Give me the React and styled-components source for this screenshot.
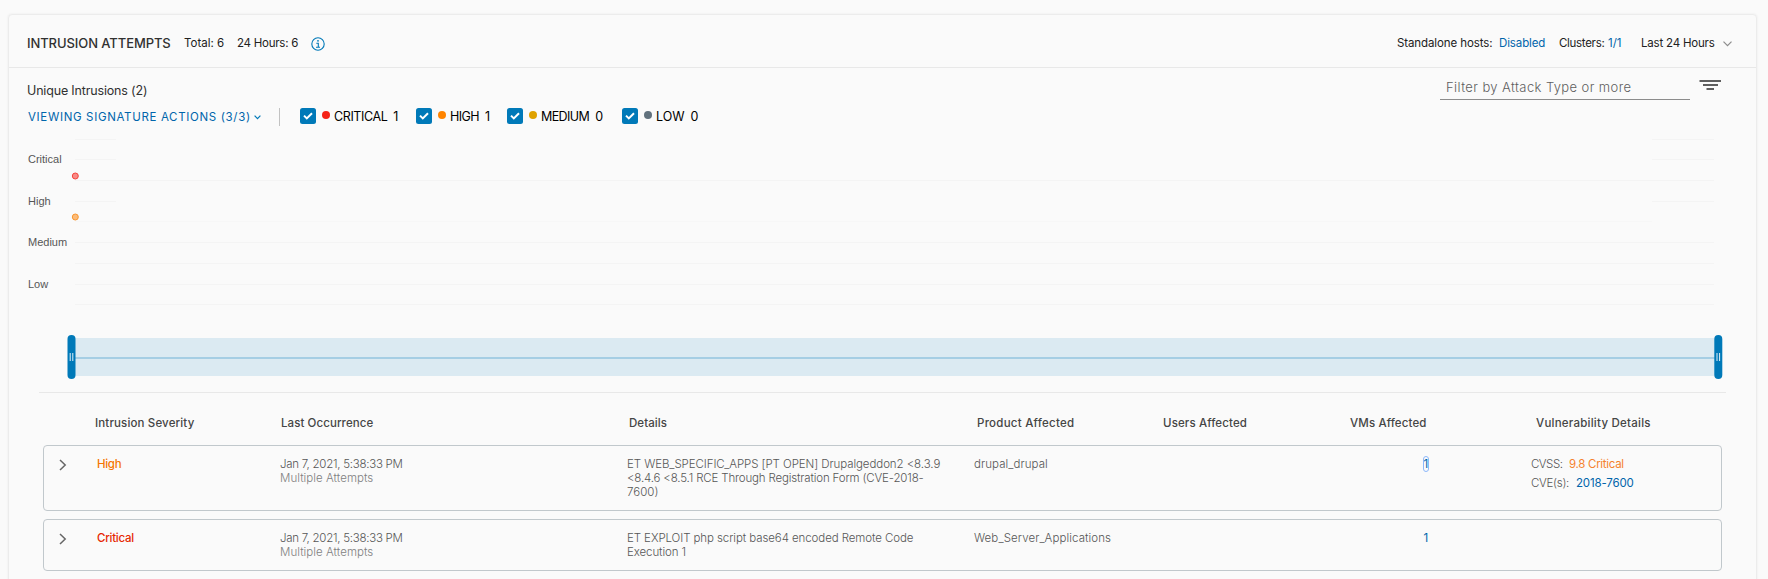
import React from 'react';
import styled, { createGlobalStyle } from 'styled-components';

const Global = createGlobalStyle`
  * { box-sizing: border-box; }
  body {
    margin: 0;
    background: #fafafa;
    color: #313131;
    font-family: Inter, 'Open Sans', sans-serif;
    overflow: hidden;
  }
`;

const Page = styled.main`
  height: 579px;
  padding: 14px 11px 0 8px;
  overflow: hidden;
`;

const Card = styled.section`
  height: 600px;
  border: 1px solid #ececec;
  border-radius: 4px;
  box-shadow: 0 0 2px #e6e6e6;
`;

const CardHeader = styled.header`
  display: flex;
  align-items: center;
  height: 53px;
  padding: 4px 24px 0 18px;
  border-bottom: 1px solid #e8e8e8;
  white-space: nowrap;
  svg { margin-top: 1px; }
`;

const Title = styled.h1`
  width: 157px;
  margin: 0;
  font-size: 13px;
  font-weight: 500;
  letter-spacing: -0.08px;
  line-height: 18px;
`;

const Stat = styled.span`
  width: ${(p) => p.$width}px;
  font-size: 11.5px;
  line-height: 18px;
  letter-spacing: ${(p) => p.$track || 0}px;
  color: ${(p) => (p.$link ? '#0065ab' : '#212121')};
`;

const Spacer = styled.div`
  flex: 1;
`;

const Toolbar = styled.div`
  display: flex;
  justify-content: space-between;
  height: 62px;
  padding: 0 33px 0 18px;
`;

const Filters = styled.div`
  display: flex;
  flex-direction: column;
  padding-top: 14px;
  white-space: nowrap;
`;

const Subtitle = styled.div`
  flex: none;
  font-size: 12.5px;
  font-weight: 400;
  letter-spacing: -0.17px;
  line-height: 18px;
`;

const FilterLine = styled.div`
  display: flex;
  flex: none;
  align-items: center;
  height: 32px;
`;

const ActionsLink = styled.a`
  display: flex;
  align-items: center;
  width: 252px;
  padding: 2px 0 0 1px;
  color: #0065ab;
  font-size: 11.5px;
  letter-spacing: 0.66px;
  svg { margin-left: 3px; }
`;

const Separator = styled.span`
  width: 1px;
  height: 18px;
  margin: 1px 20px 0 0;
  background: #c2c2c2;
`;

const Check = styled.label`
  display: flex;
  align-items: center;
  width: ${(p) => p.$width}px;
  font-size: 12.5px;
  color: #000;
`;

const CheckBox = styled.span`
  display: flex;
  align-items: center;
  justify-content: center;
  width: 16px;
  height: 16px;
  border-radius: 2.5px;
  background: #0079b8;
`;

const Dot = styled.i`
  width: 8px;
  height: 8px;
  margin: -2px 4px 0 6px;
  border-radius: 50%;
  background: ${(p) => p.$color};
`;

const CheckText = styled.span`
  margin-right: 6px;
  letter-spacing: ${(p) => p.$track}px;
`;

const Search = styled.div`
  display: flex;
  align-items: flex-start;
`;

const SearchField = styled.div`
  width: 250px;
  height: 32px;
  margin-right: 9px;
  padding: 10px 6px 0;
  border-bottom: 1px solid #8c8c8c;
  color: #5e5e5e;
  font-size: 13px;
  font-weight: 300;
  letter-spacing: 0.4px;
  line-height: 18px;
`;

const FilterIcon = styled.svg`
  margin-top: 11px;
`;

const Chart = styled.svg`
  display: block;
  text { font: 11px 'Liberation Sans', Arial, sans-serif; fill: #565656; }
`;

const Divider = styled.hr`
  height: 1px;
  margin: 7px 30px 0;
  border: 0;
  background: #e8e8e8;
`;

const TableHead = styled.div`
  display: grid;
  grid-template-columns: 186px 348px 348px 186px 187px 186px 1fr;
  height: 52px;
  padding: 21px 0 0 86px;
  color: #454545;
  font-size: 11.5px;
  font-weight: 500;
  line-height: 18px;
  white-space: nowrap;
`;

const HeadCell = styled.span`
  letter-spacing: ${(p) => p.$track}px;
`;

const Row = styled.div`
  display: grid;
  grid-template-columns: 53px 183px 347px 347px 186px 187px 184px 1fr;
  height: ${(p) => p.$height}px;
  margin: 0 34px 8px 34px;
  border: 1px solid #c1c8cc;
  border-radius: 4px;
  padding-top: 11px;
  color: #565656;
  font-size: 11.5px;
  font-weight: 300;
  line-height: 14px;
  white-space: nowrap;
`;

const Expander = styled.svg`
  margin: 2px 0 0 15px;
`;

const Severity = styled.span`
  color: ${(p) => p.$color};
  font-weight: 500;
  letter-spacing: ${(p) => p.$track}px;
`;

const Line = styled.div`
  color: ${(p) => (p.$muted ? '#808080' : 'inherit')};
  letter-spacing: ${(p) => p.$track || 0}px;
`;

const CountCell = styled.div`
  padding-right: 103px;
  text-align: right;
`;

const Count = styled.a`
  display: inline-block;
  width: 4px;
  border-radius: 2px;
  color: #0065ab;
  font-weight: 400;
  text-indent: -0.5px;
  outline: ${(p) => (p.$focused ? '1.5px solid #8db8fa' : 'none')};
`;

const Vulnerability = styled.div`
  display: flex;
  height: 19px;
  align-items: flex-start;
`;

const Key = styled.span`
  width: ${(p) => p.$width}px;
  letter-spacing: ${(p) => p.$track}px;
`;

const Value = styled.span`
  color: ${(p) => p.$color};
  font-weight: ${(p) => p.$weight};
  letter-spacing: ${(p) => p.$track}px;
`;

const LEVELS = [
  { name: 'CRITICAL', count: 1, color: '#f52317', width: 116, track: -0.4 },
  { name: 'HIGH', count: 1, color: '#ff8400', width: 91, track: -0.55 },
  { name: 'MEDIUM', count: 0, color: '#dfa200', width: 115, track: -0.6 },
  { name: 'LOW', count: 0, color: '#61717d', width: 90, track: 0 },
];

const HEADS = [
  ['Intrusion Severity', 0.15],
  ['Last Occurrence', 0.08],
  ['Details', 0.05],
  ['Product Affected', 0.25],
  ['Users Affected', 0.12],
  ['VMs Affected', 0.12],
  ['Vulnerability Details', 0.24],
];

const SCALE = [['Critical', 163], ['High', 205], ['Medium', 246], ['Low', 288]];

const ROWS = [
  {
    severity: 'High', color: '#f57600', track: -0.3, height: 66, focused: true,
    details: [
      ['ET WEB_SPECIFIC_APPS [PT OPEN] Drupalgeddon2 <8.3.9', -0.08],
      ['<8.4.6 <8.5.1 RCE Through Registration Form (CVE-2018-', -0.16],
      ['7600)', 0],
    ],
    product: 'drupal_drupal', productTrack: 0.07,
    cvss: '9.8 Critical', cve: '2018-7600',
  },
  {
    severity: 'Critical', color: '#e62700', track: -0.25, height: 52,
    details: [
      ['ET EXPLOIT php script base64 encoded Remote Code', -0.09],
      ['Execution 1', -0.1],
    ],
    product: 'Web_Server_Applications', productTrack: 0.09,
  },
];

function InfoIcon() {
  return (
    <svg width="14" height="14" viewBox="0 0 14 14" fill="none" stroke="#0079b8">
      <circle cx="7" cy="7" r="6.2" strokeWidth="1.1" />
      <path d="M5.3 6.2h2v4M5 10.3h4" strokeWidth="1.1" />
      <circle cx="7" cy="3.8" r=".9" fill="#0079b8" stroke="none" />
    </svg>
  );
}

function RangeHandle({ x }) {
  return (
    <g>
      <rect x={x} y="335" width="8" height="44" rx="4" fill="#0079b8" />
      <path d={`M${x + 2.7} 353v8M${x + 5.3} 353v8`} stroke="#e3f1f8" />
    </g>
  );
}

function SeverityChart() {
  return (
    <Chart width="1747" height="255" viewBox="9 130 1747 255">
      <g stroke="#f4f4f4">
        {[139.5, 159.5, 201.5].map((y) => <path key={y} d={`M75 ${y}h41M1652 ${y}h62`} />)}
        {[221.5].map((y) => <path key={y} d={`M75 ${y}H1652`} stroke="#f7f7f7" />)}
        {[180.5, 242.5, 263.5, 284.5, 304.5].map((y) => <path key={y} d={`M75 ${y}H1714`} />)}
      </g>
      {SCALE.map(([name, y]) => <text key={name} x="28" y={y}>{name}</text>)}
      <circle cx="75.3" cy="176" r="3" fill="#f88a86" stroke="#f5443d" />
      <circle cx="75.3" cy="217" r="3" fill="#fbbb79" stroke="#f9962f" />
      <rect x="72" y="338" width="1644" height="38" fill="#dbeaf2" />
      <rect x="75" y="357" width="1640" height="2" fill="#a5cee4" />
      <RangeHandle x={67.5} />
      <RangeHandle x={1714.3} />
    </Chart>
  );
}

function IntrusionRow({ row }) {
  return (
    <Row $height={row.height}>
      <Expander width="8" height="12" viewBox="0 0 8 12" fill="none" stroke="#666" strokeWidth="1.5">
        <path d="M1 1l5.2 5L1 11" />
      </Expander>
      <Severity $color={row.color} $track={row.track}>{row.severity}</Severity>
      <div>
        <Line $track={-0.26}>Jan 7, 2021, 5:38:33 PM</Line>
        <Line $muted $track={0.04}>Multiple Attempts</Line>
      </div>
      <div>
        {row.details.map(([text, track]) => <Line key={text} $track={track}>{text}</Line>)}
      </div>
      <Line $track={row.productTrack}>{row.product}</Line>
      <span />
      <CountCell><Count $focused={row.focused}>1</Count></CountCell>
      <div>
        {row.cvss && (
          <Vulnerability>
            <Key $width={38} $track={-0.5}>CVSS:</Key>
            <Value $color="#f5822e" $weight={400} $track={-0.3}>{row.cvss}</Value>
          </Vulnerability>
        )}
        {row.cve && (
          <Vulnerability>
            <Key $width={45} $track={-0.3}>CVE(s):</Key>
            <Value $color="#0065ab" $weight={400} $track={-0.15}>{row.cve}</Value>
          </Vulnerability>
        )}
      </div>
    </Row>
  );
}

export default function App() {
  return (
    <Page>
      <Global />
      <Card>
        <CardHeader>
          <Title>INTRUSION ATTEMPTS</Title>
          <Stat $width={53}>Total: 6</Stat>
          <Stat $width={74} $track={-0.25}>24 Hours: 6</Stat>
          <InfoIcon />
          <Spacer />
          <Stat $width={102} $track={-0.1}>Standalone hosts:</Stat>
          <Stat $width={60} $track={-0.12} $link>Disabled</Stat>
          <Stat $width={49} $track={-0.3}>Clusters:</Stat>
          <Stat $width={33} $link>1/1</Stat>
          <Stat $width={82} $track={-0.2}>Last 24 Hours</Stat>
          <svg width="9" height="6" viewBox="0 0 9 6" fill="none" stroke="#8c8c8c" strokeWidth="1.2">
            <path d="M.5.7l4 4 4-4" />
          </svg>
        </CardHeader>
        <Toolbar>
          <Filters>
            <Subtitle>Unique Intrusions (2)</Subtitle>
            <FilterLine>
              <ActionsLink>
                VIEWING SIGNATURE ACTIONS (3/3)
                <svg width="7" height="5" viewBox="0 0 7 5" fill="none" stroke="#0079b8" strokeWidth="1.2">
                  <path d="M.6.7l2.9 2.9L6.4.7" />
                </svg>
              </ActionsLink>
              <Separator />
              {LEVELS.map((level) => (
                <Check key={level.name} $width={level.width}>
                  <CheckBox>
                    <svg width="10" height="8" viewBox="0 0 10 8" fill="none" stroke="#fff" strokeWidth="2">
                      <path d="M1 3.6l2.8 2.8L9 1.2" />
                    </svg>
                  </CheckBox>
                  <Dot $color={level.color} />
                  <CheckText $track={level.track}>{level.name}</CheckText>
                  {level.count}
                </Check>
              ))}
            </FilterLine>
          </Filters>
          <Search>
            <SearchField>Filter by Attack Type or more</SearchField>
            <FilterIcon width="24" height="12" viewBox="0 0 24 12" fill="none" stroke="#5e5e5e" strokeWidth="2">
              <path d="M.5 2H22M4 6h15M7.5 10h7.5" />
            </FilterIcon>
          </Search>
        </Toolbar>
        <SeverityChart />
        <Divider />
        <TableHead>
          {HEADS.map(([text, track]) => <HeadCell key={text} $track={track}>{text}</HeadCell>)}
        </TableHead>
        {ROWS.map((row) => <IntrusionRow key={row.severity} row={row} />)}
      </Card>
    </Page>
  );
}
